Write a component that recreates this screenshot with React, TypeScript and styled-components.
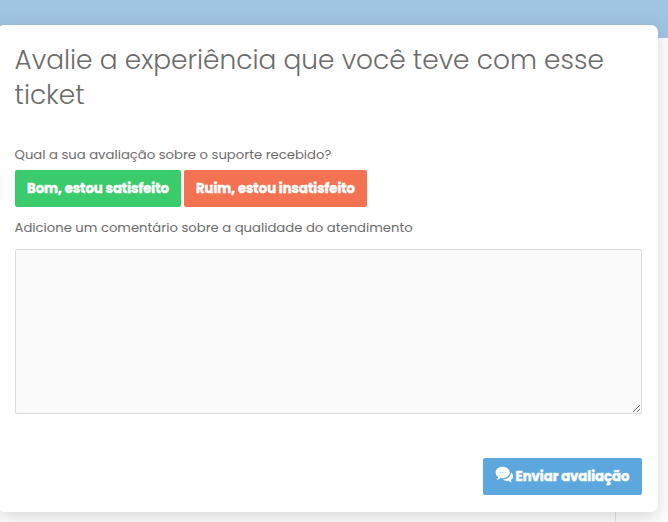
import React from "react";
import styled, { createGlobalStyle } from "styled-components";

const GlobalStyle = createGlobalStyle`
  * { box-sizing: border-box; }
  body { margin: 0; overflow: hidden; background: #fafafa; font-family: Poppins, Inter, sans-serif; color: #6c6c6c; }
`;

const Page = styled.div`
  height: 522px;
  overflow: hidden;
  padding-top: 25px;
  background:
    linear-gradient(#9fc5e3, #9fc5e3) 0 0 / 100% 38px no-repeat,
    linear-gradient(#e4e4e4, #e4e4e4) 615px 38px / 1px 484px no-repeat,
    #fff;
`;

const Dialog = styled.form`
  display: flex;
  flex-direction: column;
  width: 661px;
  height: 487px;
  margin-left: -3px;
  padding: 17px 16px 17px 17.5px;
  border-radius: 7px;
  background: #fff;
  box-shadow: 0 5px 20px rgba(0, 0, 0, 0.17);
`;

const Title = styled.h1`
  margin: 0;
  font-size: 26.4px;
  font-weight: 300;
  line-height: 35px;
  white-space: nowrap;
`;

const Label = styled.label`
  font-size: 13.2px;
  line-height: 20px;
  white-space: nowrap;
`;

const Question = styled.section`
  margin-top: 33px;
  display: flex;
  flex-direction: column;
`;

const Choices = styled.div`
  display: flex;
  gap: 3px;
  margin: 5px 0 11px 0.5px;
`;

const tones = { good: "#3acc6c", bad: "#f27252", primary: "#5ca8de" };

const Button = styled.button<{ $tone: keyof typeof tones; $width: number }>`
  display: flex;
  align-items: center;
  justify-content: center;
  gap: 2px;
  width: ${(p) => p.$width}px;
  height: 37px;
  padding: 1px 0 0;
  border: 0;
  border-radius: 2px;
  background: ${(p) => tones[p.$tone]};
  color: #fff;
  font: 700 13.2px/20px Poppins, Inter, sans-serif;
  -webkit-text-stroke: 0.45px #fff;
  white-space: nowrap;
`;

const Comment = styled.textarea`
  display: block;
  width: 627px;
  height: 165px;
  margin: 11px 0 0 0.5px;
  border: 1px solid #dcdcdc;
  border-radius: 2px;
  background: #fafafa;
  resize: both;
  outline: none;
`;

const Footer = styled.footer`
  display: flex;
  justify-content: flex-end;
  margin-top: auto;
`;

const Icon = styled.svg`
  flex: none;
  width: 19px;
  height: 18px;
  margin: -4px 0 0 -1px;
`;

const ChatIcon = () => (
  <Icon viewBox="0 0 19 18" fill="#fff">
    <path d="M7.500.8C3.600.8.600 3.200.600 6.500c0 1.900 1 3.500 2.500 4.500-.2 1.200-.8 2-1.500 2.700 1.600 0 2.900-.7 3.900-1.700l2 .2c4 0 7.200-2.500 7.200-5.700S11.500.8 7.500.8Z" />
    <path d="M15.900 6.500c0 3.800-3.600 6.700-8 6.900 1.300 1.200 3.300 1.700 5.400 1.400 1 .9 2.200 1.500 3.700 1.700-.6-.8-1.100-1.500-1.200-2.500 1.400-.8 2.300-2 2.300-3.500 0-1.700-.8-3.100-2.200-4Z" />
    <g fill="#b5d8f0">
      <rect x="4.500" y="6" width="1.500" height="1.200" />
      <rect x="7" y="6" width="1.500" height="1.200" />
      <rect x="9.500" y="6" width="1.500" height="1.200" />
    </g>
  </Icon>
);

export default function App() {
  return (
    <>
      <GlobalStyle />
      <Page>
        <Dialog onSubmit={(e) => e.preventDefault()}>
          <Title>
            Avalie a experiência que você teve com esse
            <br />
            ticket
          </Title>
          <Question>
            <Label as="span">Qual a sua avaliação sobre o suporte recebido?</Label>
            <Choices>
              <Button type="button" $tone="good" $width={166}>Bom, estou satisfeito</Button>
              <Button type="button" $tone="bad" $width={183}>Ruim, estou insatisfeito</Button>
            </Choices>
            <Label htmlFor="comment">Adicione um comentário sobre a qualidade do atendimento</Label>
            <Comment id="comment" />
          </Question>
          <Footer>
            <Button type="submit" $tone="primary" $width={159}>
              <ChatIcon />
              <span>Enviar avaliação</span>
            </Button>
          </Footer>
        </Dialog>
      </Page>
    </>
  );
}
